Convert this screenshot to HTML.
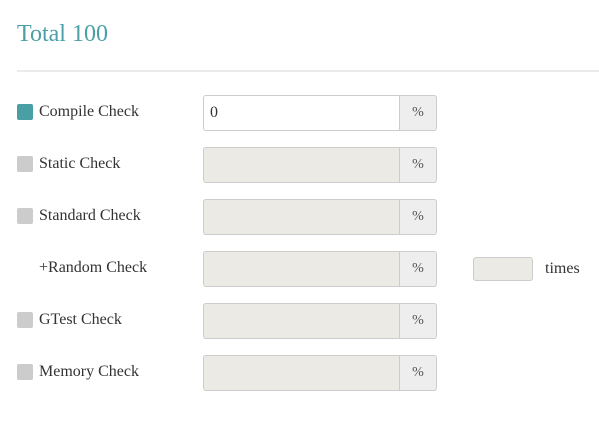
<!DOCTYPE html>
<html><head><style>
body{margin:0;width:599px;height:432px;background:#fff;font-family:"Liberation Serif",serif;color:#333;position:relative;overflow:hidden}
.t{position:absolute;left:17px;top:21px;font-size:24px;color:#4aa0a6}
.hr{position:absolute;left:17px;top:70px;width:582px;height:2px;background:#ebebeb}
.cb{position:absolute;left:17px;width:16px;height:16px;border-radius:2px;background:#ccc}
.lb{position:absolute;left:39px;font-size:16px;color:#333}
.in{position:absolute;left:203px;width:196px;height:34px;border:1px solid #ccc;border-radius:3px 0 0 3px;background:#ebeae4}
.ad{position:absolute;left:399px;width:36px;height:34px;border:1px solid #ccc;border-radius:0 3px 3px 0;background:#eee;font-size:14px;text-align:center;line-height:34px;color:#555}
</style></head><body>
<div class="t">Total 100</div>
<div class="hr"></div>

<div class="cb" style="top:104px;background:#4a9fa5"></div><div class="lb" style="top:103px">Compile Check</div>
<div class="in" style="top:95px;background:#fff"><span style="position:absolute;left:6px;top:8px;font-size:16px">0</span></div><div class="ad" style="top:95px">%</div>

<div class="cb" style="top:156px"></div><div class="lb" style="top:155px">Static Check</div>
<div class="in" style="top:147px"></div><div class="ad" style="top:147px">%</div>

<div class="cb" style="top:208px"></div><div class="lb" style="top:207px">Standard Check</div>
<div class="in" style="top:199px"></div><div class="ad" style="top:199px">%</div>

<div class="lb" style="top:259px">+Random Check</div>
<div class="in" style="top:251px"></div><div class="ad" style="top:251px">%</div>
<div style="position:absolute;left:473px;top:257px;width:58px;height:22px;border:1px solid #ccc;border-radius:3px;background:#ebeae4"></div>
<div class="lb" style="left:545px;top:260px">times</div>

<div class="cb" style="top:312px"></div><div class="lb" style="top:311px">GTest Check</div>
<div class="in" style="top:303px"></div><div class="ad" style="top:303px">%</div>

<div class="cb" style="top:364px"></div><div class="lb" style="top:363px">Memory Check</div>
<div class="in" style="top:355px"></div><div class="ad" style="top:355px">%</div>
</body></html>
